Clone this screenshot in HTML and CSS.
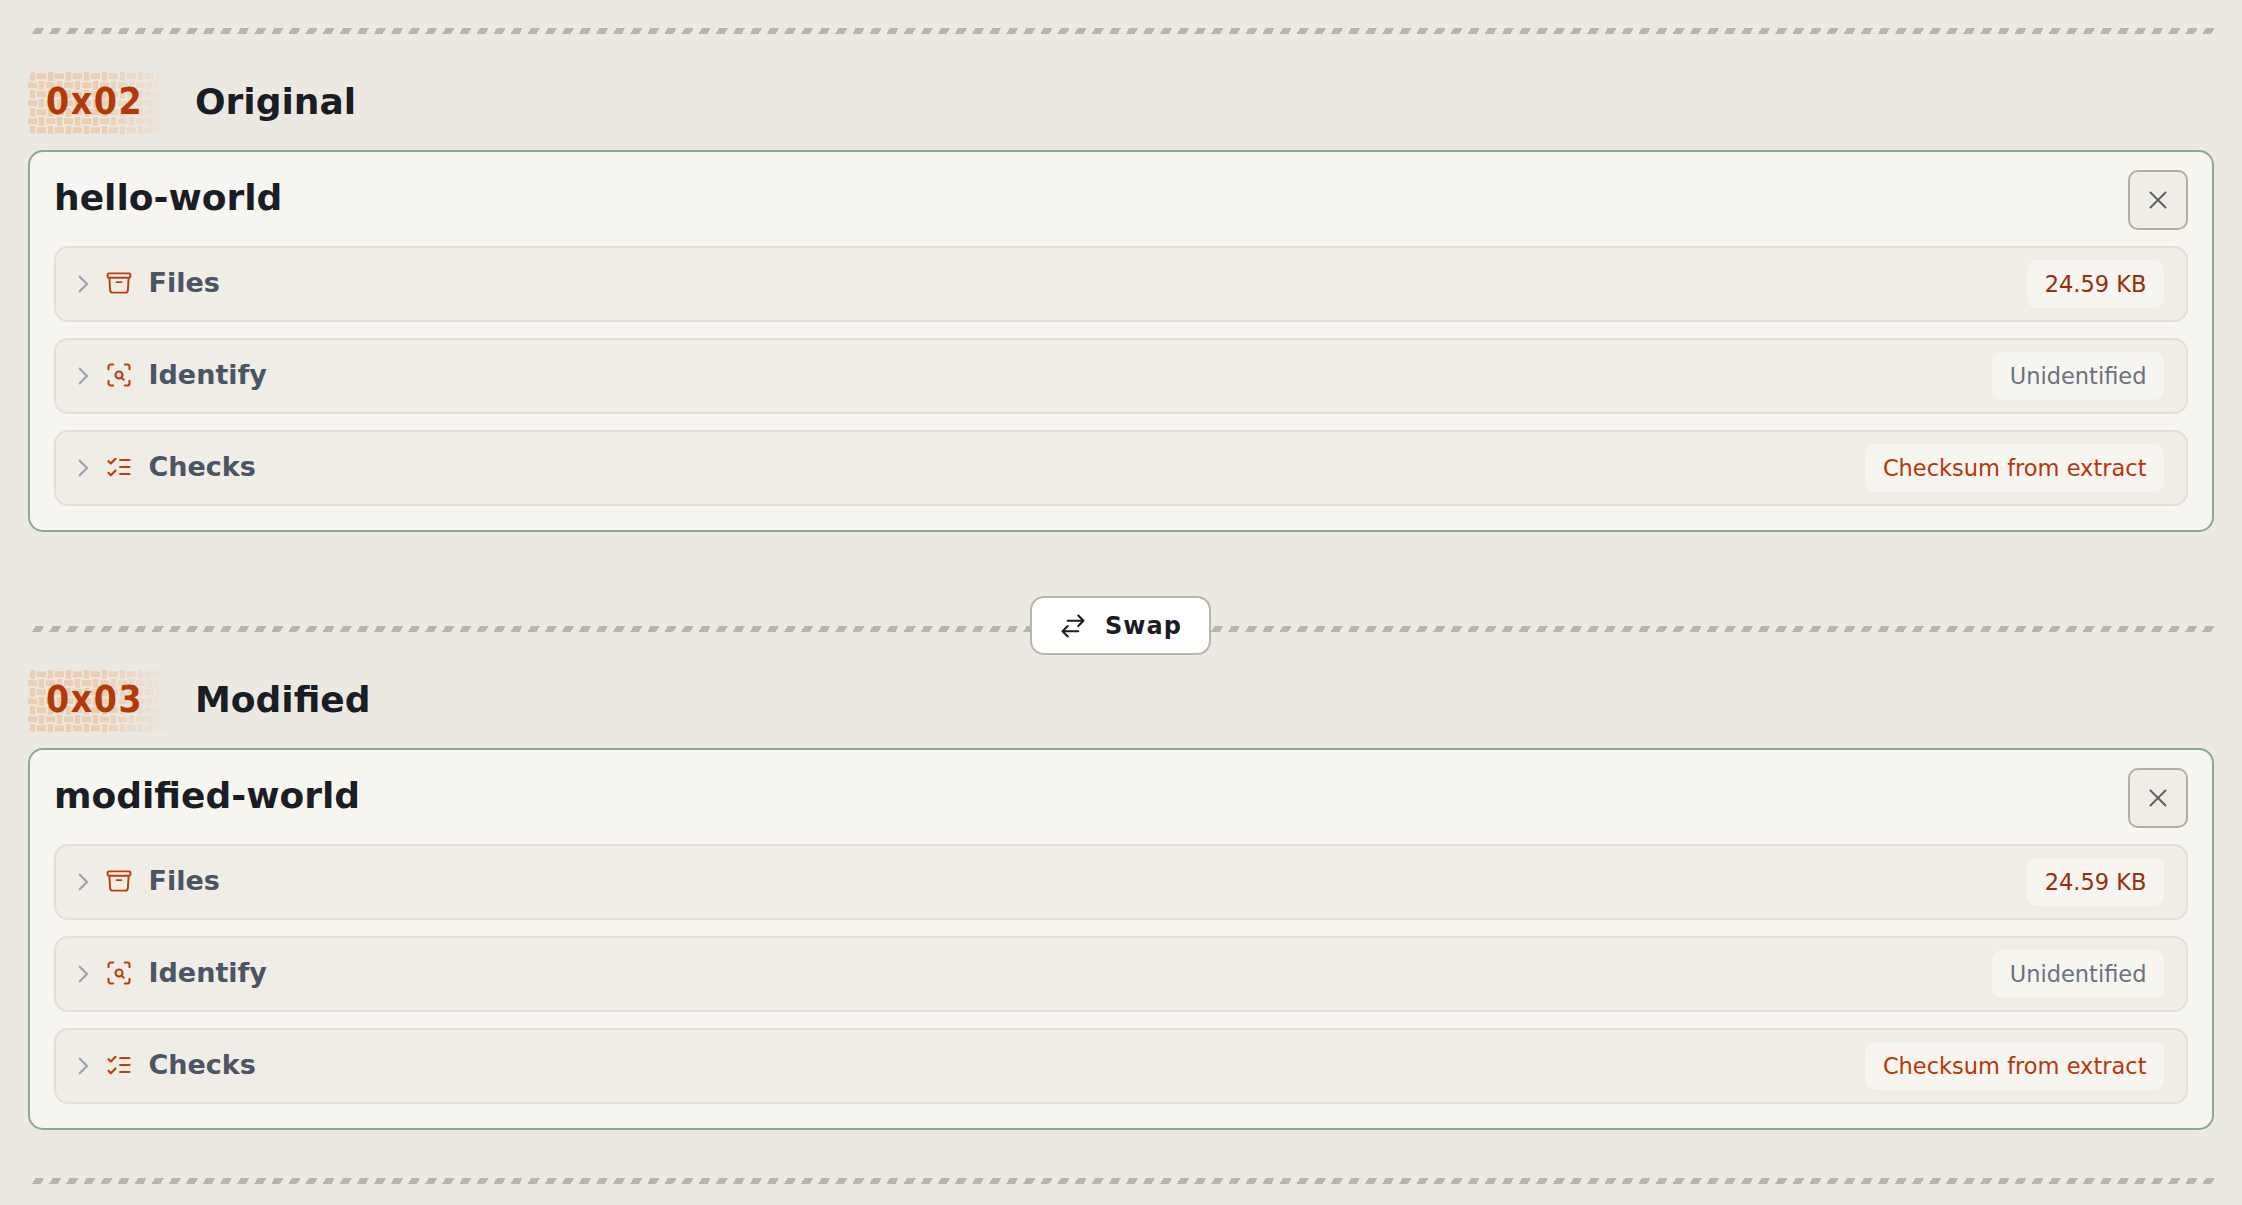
FILE: index.html
```html
<!DOCTYPE html>
<html lang="en">
<head>
  <meta charset="UTF-8">
  <title>Compare</title>
  <link rel="stylesheet" href="styles.css">
</head>
<body>
  <svg class="svg-defs" width="0" height="0">
    <defs>
      <pattern id="weave" width="18" height="18" patternUnits="userSpaceOnUse">
        <g fill="#eacdb2">
          <rect x="1.8" y="0" width="5.4" height="8.8"/>
          <rect x="8.7" y="1.2" width="9.3" height="6"/>
          <rect x="10.8" y="9" width="5.4" height="8.8"/>
          <rect x="0" y="10.2" width="9.3" height="6"/>
        </g>
      </pattern>
      <linearGradient id="weaveFade" x1="0" x2="1" y1="0" y2="0">
        <stop offset="0.5" stop-color="#fff"/>
        <stop offset="1" stop-color="#fff" stop-opacity="0"/>
      </linearGradient>
      <mask id="weaveMask">
        <rect width="142" height="62" fill="url(#weaveFade)"/>
      </mask>
    </defs>
  </svg>

  <div class="divider divider-top"></div>

  <!-- Original -->
  <section class="panel">
    <div class="panel-head">
      <div class="hex-badge">
        <svg class="hex-bg" width="142" height="62"><rect width="142" height="62" rx="6" fill="url(#weave)" mask="url(#weaveMask)"/></svg>
        <span class="hex-text">0x02</span>
      </div>
      <h2 class="panel-title">Original</h2>
    </div>
    <div class="card">
      <div class="card-top">
        <h3 class="card-name">hello-world</h3>
        <button class="close-btn">
          <svg width="24" height="24" viewBox="0 0 24 24" fill="none" stroke="currentColor" stroke-width="2" stroke-linecap="round"><path d="M4.5 4.5l15 15M19.5 4.5l-15 15"/></svg>
        </button>
      </div>
      <div class="row">
        <svg class="chev" width="16" height="20" viewBox="0 0 16 20" fill="none" stroke="currentColor" stroke-width="2.2"><path d="M4 2l8 8-8 8"/></svg>
        <svg class="row-icon" width="28" height="28" viewBox="0 0 24 24" fill="none" stroke="currentColor" stroke-width="1.7" stroke-linejoin="round" stroke-linecap="round"><path d="M20.25 7.5l-.625 10.632a2.25 2.25 0 0 1-2.247 2.118H6.622a2.25 2.25 0 0 1-2.247-2.118L3.75 7.5M10 11.25h4M3.375 7.5h17.25c.621 0 1.125-.504 1.125-1.125v-1.5c0-.621-.504-1.125-1.125-1.125H3.375c-.621 0-1.125.504-1.125 1.125v1.5c0 .621.504 1.125 1.125 1.125z"/></svg>
        <span class="row-label">Files</span>
        <span class="pill pill-size">24.59 KB</span>
      </div>
      <div class="row">
        <svg class="chev" width="16" height="20" viewBox="0 0 16 20" fill="none" stroke="currentColor" stroke-width="2.2"><path d="M4 2l8 8-8 8"/></svg>
        <svg class="row-icon" width="28" height="28" viewBox="0 0 24 24" fill="none" stroke="currentColor" stroke-width="1.8" stroke-linecap="round" stroke-linejoin="round"><path d="M3 7V5a2 2 0 0 1 2-2h2M17 3h2a2 2 0 0 1 2 2v2M21 17v2a2 2 0 0 1-2 2h-2M7 21H5a2 2 0 0 1-2-2v-2"/><circle cx="12" cy="12" r="3"/><path d="M16 16l-1.9-1.9"/></svg>
        <span class="row-label">Identify</span>
        <span class="pill pill-muted">Unidentified</span>
      </div>
      <div class="row">
        <svg class="chev" width="16" height="20" viewBox="0 0 16 20" fill="none" stroke="currentColor" stroke-width="2.2"><path d="M4 2l8 8-8 8"/></svg>
        <svg class="row-icon" width="28" height="28" viewBox="0 0 24 24" fill="none" stroke="currentColor" stroke-width="1.9" stroke-linecap="round" stroke-linejoin="round"><path d="M3 17l2 2 4-4M3 7l2 2 4-4M13 6h8M13 12h8M13 18h8"/></svg>
        <span class="row-label">Checks</span>
        <span class="pill pill-warn">Checksum from extract</span>
      </div>
    </div>
  </section>

  <div class="swap-row">
    <div class="divider swap-line swap-line-left"></div>
    <button class="swap-btn">
      <svg width="28" height="28" viewBox="0 0 24 24" fill="none" stroke="currentColor" stroke-width="1.8" stroke-linecap="round" stroke-linejoin="round"><path d="M7.5 21L3 16.5m0 0L7.5 12M3 16.5h13.5m0-13.5L21 7.5m0 0L16.5 12M21 7.5H7.5"/></svg>
      <span>Swap</span>
    </button>
    <div class="divider swap-line"></div>
  </div>

  <!-- Modified -->
  <section class="panel">
    <div class="panel-head">
      <div class="hex-badge">
        <svg class="hex-bg" width="142" height="62"><rect width="142" height="62" rx="6" fill="url(#weave)" mask="url(#weaveMask)"/></svg>
        <span class="hex-text">0x03</span>
      </div>
      <h2 class="panel-title">Modified</h2>
    </div>
    <div class="card">
      <div class="card-top">
        <h3 class="card-name">modified-world</h3>
        <button class="close-btn">
          <svg width="24" height="24" viewBox="0 0 24 24" fill="none" stroke="currentColor" stroke-width="2" stroke-linecap="round"><path d="M4.5 4.5l15 15M19.5 4.5l-15 15"/></svg>
        </button>
      </div>
      <div class="row">
        <svg class="chev" width="16" height="20" viewBox="0 0 16 20" fill="none" stroke="currentColor" stroke-width="2.2"><path d="M4 2l8 8-8 8"/></svg>
        <svg class="row-icon" width="28" height="28" viewBox="0 0 24 24" fill="none" stroke="currentColor" stroke-width="1.7" stroke-linejoin="round" stroke-linecap="round"><path d="M20.25 7.5l-.625 10.632a2.25 2.25 0 0 1-2.247 2.118H6.622a2.25 2.25 0 0 1-2.247-2.118L3.75 7.5M10 11.25h4M3.375 7.5h17.25c.621 0 1.125-.504 1.125-1.125v-1.5c0-.621-.504-1.125-1.125-1.125H3.375c-.621 0-1.125.504-1.125 1.125v1.5c0 .621.504 1.125 1.125 1.125z"/></svg>
        <span class="row-label">Files</span>
        <span class="pill pill-size">24.59 KB</span>
      </div>
      <div class="row">
        <svg class="chev" width="16" height="20" viewBox="0 0 16 20" fill="none" stroke="currentColor" stroke-width="2.2"><path d="M4 2l8 8-8 8"/></svg>
        <svg class="row-icon" width="28" height="28" viewBox="0 0 24 24" fill="none" stroke="currentColor" stroke-width="1.8" stroke-linecap="round" stroke-linejoin="round"><path d="M3 7V5a2 2 0 0 1 2-2h2M17 3h2a2 2 0 0 1 2 2v2M21 17v2a2 2 0 0 1-2 2h-2M7 21H5a2 2 0 0 1-2-2v-2"/><circle cx="12" cy="12" r="3"/><path d="M16 16l-1.9-1.9"/></svg>
        <span class="row-label">Identify</span>
        <span class="pill pill-muted">Unidentified</span>
      </div>
      <div class="row">
        <svg class="chev" width="16" height="20" viewBox="0 0 16 20" fill="none" stroke="currentColor" stroke-width="2.2"><path d="M4 2l8 8-8 8"/></svg>
        <svg class="row-icon" width="28" height="28" viewBox="0 0 24 24" fill="none" stroke="currentColor" stroke-width="1.9" stroke-linecap="round" stroke-linejoin="round"><path d="M3 17l2 2 4-4M3 7l2 2 4-4M13 6h8M13 12h8M13 18h8"/></svg>
        <span class="row-label">Checks</span>
        <span class="pill pill-warn">Checksum from extract</span>
      </div>
    </div>
  </section>

  <div class="divider divider-end"></div>
</body>
</html>
```
FILE: styles.css
```css
* {
  box-sizing: border-box;
}

html, body {
  height: 100%;
}

body {
  margin: 0;
  padding: 28px 28px 0;
  background-color: #ece9e2;
  font-family: "DejaVu Sans", sans-serif;
  color: #1a1d23;
  overflow: hidden;
}

.svg-defs {
  position: absolute;
}

.divider {
  height: 6px;
  background-image: repeating-linear-gradient(120deg, transparent 0, transparent 3px, #b8b6aa 3px, #b8b6aa 10.6px, transparent 10.6px, transparent 14.8px);
}

.divider-top,
.divider-end {
  margin-left: 4px;
}

.divider-end {
  margin-top: 48px;
}

.panel-head {
  display: flex;
  align-items: center;
  gap: 24px;
  height: 62px;
  margin-bottom: 16px;
}

.panel > .panel-head {
  margin-top: 38px;
}

.hex-badge {
  position: relative;
  width: 142px;
  height: 62px;
  display: flex;
  align-items: center;
  padding-left: 18px;
}

.hex-bg {
  position: absolute;
  top: 0;
  left: 0;
}

.hex-text {
  position: relative;
  font-size: 37px;
  font-stretch: condensed;
  letter-spacing: 1.6px;
  font-weight: 700;
  color: #b33a08;
  margin-bottom: 3px;
}

.panel-title {
  margin: 0 0 3px 1px;
  font-size: 36px;
  font-weight: 700;
}

.card {
  background-color: #f7f5f0;
  border: 2px solid #8aa896;
  border-radius: 15px;
  padding: 18px 24px 24px;
  display: flex;
  flex-direction: column;
  gap: 16px;
}

.card-top {
  display: flex;
  justify-content: space-between;
  align-items: flex-start;
  height: 60px;
}

.card-name {
  margin: 7px 0 0;
  font-size: 36px;
  font-weight: 700;
}

.close-btn {
  width: 60px;
  height: 60px;
  display: flex;
  align-items: center;
  justify-content: center;
  background-color: #f0ede7;
  border: 2px solid #b0aea2;
  border-radius: 10px;
  color: #5f6368;
  padding: 0;
}

.row {
  display: flex;
  align-items: center;
  height: 76px;
  padding: 0 22px 0 19px;
  background-color: #f0ede7;
  border: 2px solid #e2dfd8;
  border-radius: 14px;
}

.chev {
  color: #9ca3af;
}

.row-icon {
  color: #b8420f;
  margin-left: 13.5px;
  margin-bottom: 3px;
}

.row-label {
  margin-left: 16px;
  margin-bottom: 3px;
  font-size: 27px;
  font-weight: 700;
  color: #4b5563;
}

.pill {
  margin-left: auto;
  height: 48px;
  display: flex;
  align-items: center;
  padding: 0 17.5px;
  background-color: #f7f5f0;
  border-radius: 10px;
  font-size: 22.5px;
}

.pill-size {
  color: #9a2d0a;
}

.pill-muted {
  color: #6b7280;
}

.pill-warn {
  color: #b8360a;
}

.swap-row {
  display: flex;
  align-items: flex-start;
  margin-top: 64px;
}

.swap-line {
  flex: 1;
  margin-top: 30px;
}

.swap-line-left {
  flex: 0 0 998px;
  margin-left: 4px;
}

.swap-btn {
  display: flex;
  align-items: center;
  justify-content: center;
  gap: 18px;
  width: 181px;
  height: 59px;
  background-color: #fff;
  border: 2px solid #b8b6aa;
  border-radius: 14px;
  color: #1a1d23;
  font-family: inherit;
  font-size: 24px;
  font-weight: 700;
  letter-spacing: 1px;
}

.swap-row + .panel > .panel-head {
  margin-top: 15px;
}
```
